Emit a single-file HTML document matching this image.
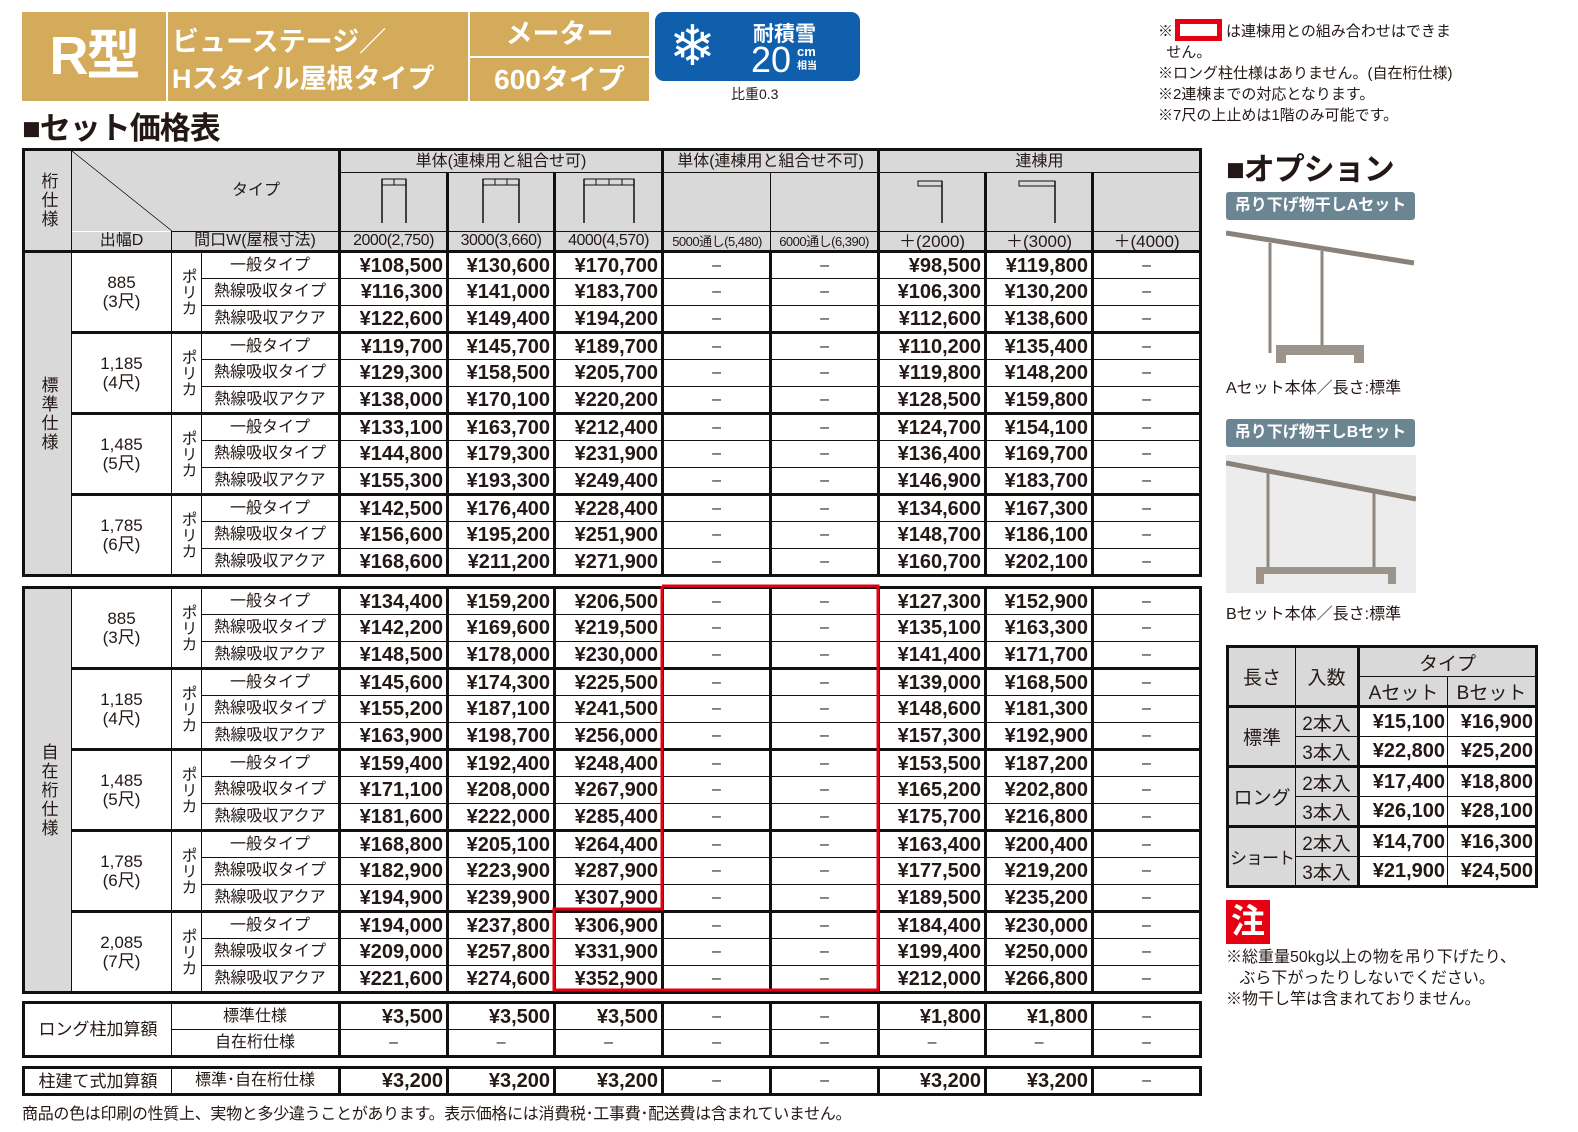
<!DOCTYPE html>
<html><head><meta charset="utf-8"><style>
*{margin:0;padding:0;box-sizing:border-box}
body{width:1578px;height:1132px;background:#fff;position:relative;overflow:hidden;font-family:"Liberation Sans","Noto Sans CJK JP",sans-serif;color:#231815}
.abs{position:absolute}
.gold{background:#d4ab5a;color:#fff;position:absolute}
table.t{position:absolute;left:22px;width:1179px;border-collapse:collapse;table-layout:fixed;border:3px solid #111}
table.t td{border:1px solid #111;text-align:center;font-size:16px;padding:0;line-height:1;white-space:nowrap;overflow:hidden}
table.t td.p{font-weight:bold;font-size:20px;text-align:right;padding-right:3px;border-left:3px solid #111;border-right:3px solid #111}
table.t td.d{border-left:3px solid #111;border-right:3px solid #111}
table.t tr.g td{border-top:3px solid #111}
table.t td.gr{background:#d9d9d9}
table.t td.ty{border-right:3px solid #111}
table.t td.n{font-size:17px;line-height:19px}
table.t td.v{writing-mode:vertical-rl;text-orientation:upright;letter-spacing:2px;font-size:17px}
table.t td.po{writing-mode:vertical-rl;text-orientation:upright;font-size:16px;line-height:1}
table.t tr{height:27px}
.hd td{background:#d9d9d9}
.st{position:absolute;left:1226px;top:645px;width:310px;border-collapse:collapse;table-layout:fixed;border:3px solid #111}
.st td{border:1px solid #111;text-align:center;font-size:19px;height:30px;padding:0;white-space:nowrap}
.st td.g{background:#d9d9d9}
.st td.p{font-weight:bold;font-size:20px;text-align:right;padding-right:2px}
.note{font-size:15px;line-height:21px}
</style></head><body>

<div class="gold" style="left:22px;top:12px;width:144px;height:89px;font-size:54px;font-weight:bold;line-height:89px;text-align:center;letter-spacing:-2px">R型</div>
<div class="gold" style="left:168px;top:12px;width:300px;height:89px;font-size:27px;font-weight:bold;padding:12px 0 0 4px;line-height:37px">ビューステージ／<br>Hスタイル屋根タイプ</div>
<div class="gold" style="left:470px;top:12px;width:179px;height:44px;font-size:27px;font-weight:bold;text-align:center;line-height:44px">メーター</div>
<div class="gold" style="left:470px;top:58px;width:179px;height:43px;font-size:28px;font-weight:bold;text-align:center;line-height:43px">600タイプ</div>
<div class="abs" style="left:655px;top:12px;width:205px;height:69px;background:#0f5fad;border-radius:9px;color:#fff">
  <div class="abs" style="left:14px;top:2px;font-size:56px;line-height:64px">❄</div>
  <div class="abs" style="left:98px;top:6px;font-size:21px;font-weight:bold">耐積雪</div>
  <div class="abs" style="left:96px;top:28px;font-size:36px;line-height:40px">20</div>
  <div class="abs" style="left:142px;top:33px;font-size:13px;line-height:13px;font-weight:bold">cm<br><span style="font-size:10px">相当</span></div>
</div>
<div class="abs" style="left:731px;top:84px;font-size:14px">比重0.3</div>
<div class="abs" style="left:22px;top:103px;font-size:31px;font-weight:bold;letter-spacing:-1px">■セット価格表</div>

<div class="abs note" style="left:1158px;top:19px">※<span style="display:inline-block;width:47px;height:22px;border:5px solid #e60012;vertical-align:-5px;margin:0 4px 0 2px"></span>は連棟用との組み合わせはできま<br>&nbsp;&nbsp;せん。<br>※ロング柱仕様はありません。(自在桁仕様)<br>※2連棟までの対応となります。<br>※7尺の上止めは1階のみ可能です。</div>

<table class="t" style="top:148px">
<colgroup><col style="width:48px"><col style="width:100px"><col style="width:30px"><col style="width:138px"><col style="width:108px"><col style="width:107px"><col style="width:108px"><col style="width:108px"><col style="width:108px"><col style="width:107px"><col style="width:107px"><col style="width:108px"></colgroup>
<tr class="hd" style="height:23px"><td rowspan="3" class="v">桁仕様</td><td colspan="3" rowspan="2" style="background:#d9d9d9 linear-gradient(to top right,transparent 49.6%,#111 49.8%,#111 50.2%,transparent 50.4%) no-repeat;background-size:100px 100%;text-align:left;padding-left:160px;border-bottom:none">タイプ</td><td colspan="3" style="border-left:3px solid #111;border-right:3px solid #111">単体(連棟用と組合せ可)</td><td colspan="2" style="border-right:3px solid #111">単体(連棟用と組合せ不可)</td><td colspan="3">連棟用</td></tr>
<tr class="hd" style="height:59px">
<td style="border-left:3px solid #111;border-right:3px solid #111"><svg width="30" height="46"><rect x="3" y="2" width="24" height="6" fill="none" stroke="#111"/><line x1="3" y1="2" x2="3" y2="46" stroke="#111" stroke-width="1.5"/><line x1="27" y1="2" x2="27" y2="46" stroke="#111" stroke-width="1.5"/><line x1="15" y1="2" x2="15" y2="8" stroke="#111"/></svg></td>
<td style="border-right:3px solid #111"><svg width="42" height="46"><rect x="3" y="2" width="36" height="6" fill="none" stroke="#111"/><line x1="3" y1="2" x2="3" y2="46" stroke="#111" stroke-width="1.5"/><line x1="39" y1="2" x2="39" y2="46" stroke="#111" stroke-width="1.5"/><line x1="15" y1="2" x2="15" y2="8" stroke="#111"/><line x1="27" y1="2" x2="27" y2="8" stroke="#111"/></svg></td>
<td style="border-right:3px solid #111"><svg width="56" height="46"><rect x="3" y="2" width="50" height="6" fill="none" stroke="#111"/><line x1="3" y1="2" x2="3" y2="46" stroke="#111" stroke-width="1.5"/><line x1="53" y1="2" x2="53" y2="46" stroke="#111" stroke-width="1.5"/><line x1="15" y1="2" x2="15" y2="8" stroke="#111"/><line x1="28" y1="2" x2="28" y2="8" stroke="#111"/><line x1="41" y1="2" x2="41" y2="8" stroke="#111"/></svg></td>
<td></td><td style="border-right:3px solid #111"></td>
<td style="border-right:3px solid #111"><svg width="30" height="46"><rect x="1" y="4" width="24" height="5" fill="none" stroke="#111"/><line x1="25" y1="4" x2="25" y2="46" stroke="#111" stroke-width="1.5"/></svg></td>
<td style="border-right:3px solid #111"><svg width="42" height="46"><rect x="1" y="4" width="36" height="5" fill="none" stroke="#111"/><line x1="37" y1="4" x2="37" y2="46" stroke="#111" stroke-width="1.5"/></svg></td>
<td></td></tr>
<tr class="hd" style="height:20px"><td style="border-top:none;border-right:none">出幅D</td><td colspan="2">間口W(屋根寸法)</td><td style="border-left:3px solid #111;border-right:3px solid #111;font-size:16px;letter-spacing:-0.5px">2000(2,750)</td><td style="border-right:3px solid #111;font-size:16px;letter-spacing:-0.5px">3000(3,660)</td><td style="border-right:3px solid #111;font-size:16px;letter-spacing:-0.5px">4000(4,570)</td><td style="font-size:13px;letter-spacing:-0.5px">5000通し(5,480)</td><td style="border-right:3px solid #111;font-size:13px;letter-spacing:-0.5px">6000通し(6,390)</td><td style="border-right:3px solid #111;font-size:17px">＋(2000)</td><td style="border-right:3px solid #111;font-size:17px">＋(3000)</td><td style="font-size:17px">＋(4000)</td></tr>

<tr class="g"><td rowspan="12" class="v gr">標準仕様</td><td rowspan="3" class="n">885<br>(3尺)</td><td rowspan="3" class="po">ポリカ</td><td class="ty">一般タイプ</td><td class="p">¥108,500</td><td class="p">¥130,600</td><td class="p">¥170,700</td><td>–</td><td class="d">–</td><td class="p">¥98,500</td><td class="p">¥119,800</td><td>–</td></tr>
<tr><td class="ty">熱線吸収タイプ</td><td class="p">¥116,300</td><td class="p">¥141,000</td><td class="p">¥183,700</td><td>–</td><td class="d">–</td><td class="p">¥106,300</td><td class="p">¥130,200</td><td>–</td></tr>
<tr><td class="ty">熱線吸収アクア</td><td class="p">¥122,600</td><td class="p">¥149,400</td><td class="p">¥194,200</td><td>–</td><td class="d">–</td><td class="p">¥112,600</td><td class="p">¥138,600</td><td>–</td></tr>
<tr class="g"><td rowspan="3" class="n">1,185<br>(4尺)</td><td rowspan="3" class="po">ポリカ</td><td class="ty">一般タイプ</td><td class="p">¥119,700</td><td class="p">¥145,700</td><td class="p">¥189,700</td><td>–</td><td class="d">–</td><td class="p">¥110,200</td><td class="p">¥135,400</td><td>–</td></tr>
<tr><td class="ty">熱線吸収タイプ</td><td class="p">¥129,300</td><td class="p">¥158,500</td><td class="p">¥205,700</td><td>–</td><td class="d">–</td><td class="p">¥119,800</td><td class="p">¥148,200</td><td>–</td></tr>
<tr><td class="ty">熱線吸収アクア</td><td class="p">¥138,000</td><td class="p">¥170,100</td><td class="p">¥220,200</td><td>–</td><td class="d">–</td><td class="p">¥128,500</td><td class="p">¥159,800</td><td>–</td></tr>
<tr class="g"><td rowspan="3" class="n">1,485<br>(5尺)</td><td rowspan="3" class="po">ポリカ</td><td class="ty">一般タイプ</td><td class="p">¥133,100</td><td class="p">¥163,700</td><td class="p">¥212,400</td><td>–</td><td class="d">–</td><td class="p">¥124,700</td><td class="p">¥154,100</td><td>–</td></tr>
<tr><td class="ty">熱線吸収タイプ</td><td class="p">¥144,800</td><td class="p">¥179,300</td><td class="p">¥231,900</td><td>–</td><td class="d">–</td><td class="p">¥136,400</td><td class="p">¥169,700</td><td>–</td></tr>
<tr><td class="ty">熱線吸収アクア</td><td class="p">¥155,300</td><td class="p">¥193,300</td><td class="p">¥249,400</td><td>–</td><td class="d">–</td><td class="p">¥146,900</td><td class="p">¥183,700</td><td>–</td></tr>
<tr class="g"><td rowspan="3" class="n">1,785<br>(6尺)</td><td rowspan="3" class="po">ポリカ</td><td class="ty">一般タイプ</td><td class="p">¥142,500</td><td class="p">¥176,400</td><td class="p">¥228,400</td><td>–</td><td class="d">–</td><td class="p">¥134,600</td><td class="p">¥167,300</td><td>–</td></tr>
<tr><td class="ty">熱線吸収タイプ</td><td class="p">¥156,600</td><td class="p">¥195,200</td><td class="p">¥251,900</td><td>–</td><td class="d">–</td><td class="p">¥148,700</td><td class="p">¥186,100</td><td>–</td></tr>
<tr><td class="ty">熱線吸収アクア</td><td class="p">¥168,600</td><td class="p">¥211,200</td><td class="p">¥271,900</td><td>–</td><td class="d">–</td><td class="p">¥160,700</td><td class="p">¥202,100</td><td>–</td></tr>
</table>

<table class="t" style="top:586px">
<colgroup><col style="width:48px"><col style="width:100px"><col style="width:30px"><col style="width:138px"><col style="width:108px"><col style="width:107px"><col style="width:108px"><col style="width:108px"><col style="width:108px"><col style="width:107px"><col style="width:107px"><col style="width:108px"></colgroup>
<tr><td rowspan="15" class="v gr">自在桁仕様</td><td rowspan="3" class="n">885<br>(3尺)</td><td rowspan="3" class="po">ポリカ</td><td class="ty">一般タイプ</td><td class="p">¥134,400</td><td class="p">¥159,200</td><td class="p">¥206,500</td><td>–</td><td class="d">–</td><td class="p">¥127,300</td><td class="p">¥152,900</td><td>–</td></tr>
<tr><td class="ty">熱線吸収タイプ</td><td class="p">¥142,200</td><td class="p">¥169,600</td><td class="p">¥219,500</td><td>–</td><td class="d">–</td><td class="p">¥135,100</td><td class="p">¥163,300</td><td>–</td></tr>
<tr><td class="ty">熱線吸収アクア</td><td class="p">¥148,500</td><td class="p">¥178,000</td><td class="p">¥230,000</td><td>–</td><td class="d">–</td><td class="p">¥141,400</td><td class="p">¥171,700</td><td>–</td></tr>
<tr class="g"><td rowspan="3" class="n">1,185<br>(4尺)</td><td rowspan="3" class="po">ポリカ</td><td class="ty">一般タイプ</td><td class="p">¥145,600</td><td class="p">¥174,300</td><td class="p">¥225,500</td><td>–</td><td class="d">–</td><td class="p">¥139,000</td><td class="p">¥168,500</td><td>–</td></tr>
<tr><td class="ty">熱線吸収タイプ</td><td class="p">¥155,200</td><td class="p">¥187,100</td><td class="p">¥241,500</td><td>–</td><td class="d">–</td><td class="p">¥148,600</td><td class="p">¥181,300</td><td>–</td></tr>
<tr><td class="ty">熱線吸収アクア</td><td class="p">¥163,900</td><td class="p">¥198,700</td><td class="p">¥256,000</td><td>–</td><td class="d">–</td><td class="p">¥157,300</td><td class="p">¥192,900</td><td>–</td></tr>
<tr class="g"><td rowspan="3" class="n">1,485<br>(5尺)</td><td rowspan="3" class="po">ポリカ</td><td class="ty">一般タイプ</td><td class="p">¥159,400</td><td class="p">¥192,400</td><td class="p">¥248,400</td><td>–</td><td class="d">–</td><td class="p">¥153,500</td><td class="p">¥187,200</td><td>–</td></tr>
<tr><td class="ty">熱線吸収タイプ</td><td class="p">¥171,100</td><td class="p">¥208,000</td><td class="p">¥267,900</td><td>–</td><td class="d">–</td><td class="p">¥165,200</td><td class="p">¥202,800</td><td>–</td></tr>
<tr><td class="ty">熱線吸収アクア</td><td class="p">¥181,600</td><td class="p">¥222,000</td><td class="p">¥285,400</td><td>–</td><td class="d">–</td><td class="p">¥175,700</td><td class="p">¥216,800</td><td>–</td></tr>
<tr class="g"><td rowspan="3" class="n">1,785<br>(6尺)</td><td rowspan="3" class="po">ポリカ</td><td class="ty">一般タイプ</td><td class="p">¥168,800</td><td class="p">¥205,100</td><td class="p">¥264,400</td><td>–</td><td class="d">–</td><td class="p">¥163,400</td><td class="p">¥200,400</td><td>–</td></tr>
<tr><td class="ty">熱線吸収タイプ</td><td class="p">¥182,900</td><td class="p">¥223,900</td><td class="p">¥287,900</td><td>–</td><td class="d">–</td><td class="p">¥177,500</td><td class="p">¥219,200</td><td>–</td></tr>
<tr><td class="ty">熱線吸収アクア</td><td class="p">¥194,900</td><td class="p">¥239,900</td><td class="p">¥307,900</td><td>–</td><td class="d">–</td><td class="p">¥189,500</td><td class="p">¥235,200</td><td>–</td></tr>
<tr class="g"><td rowspan="3" class="n">2,085<br>(7尺)</td><td rowspan="3" class="po">ポリカ</td><td class="ty">一般タイプ</td><td class="p">¥194,000</td><td class="p">¥237,800</td><td class="p">¥306,900</td><td>–</td><td class="d">–</td><td class="p">¥184,400</td><td class="p">¥230,000</td><td>–</td></tr>
<tr><td class="ty">熱線吸収タイプ</td><td class="p">¥209,000</td><td class="p">¥257,800</td><td class="p">¥331,900</td><td>–</td><td class="d">–</td><td class="p">¥199,400</td><td class="p">¥250,000</td><td>–</td></tr>
<tr><td class="ty">熱線吸収アクア</td><td class="p">¥221,600</td><td class="p">¥274,600</td><td class="p">¥352,900</td><td>–</td><td class="d">–</td><td class="p">¥212,000</td><td class="p">¥266,800</td><td>–</td></tr>
</table>

<svg class="abs" style="left:0;top:0" width="1578" height="1132"><polyline points="662,586 878,586 878,990 554,990 554,909 662,909 662,586" fill="none" stroke="#e60012" stroke-width="3"/></svg>

<table class="t" style="top:1001px">
<colgroup><col style="width:48px"><col style="width:100px"><col style="width:30px"><col style="width:138px"><col style="width:108px"><col style="width:107px"><col style="width:108px"><col style="width:108px"><col style="width:108px"><col style="width:107px"><col style="width:107px"><col style="width:108px"></colgroup>
<tr><td colspan="2" rowspan="2" style="font-size:17px">ロング柱加算額</td><td colspan="2" class="ty">標準仕様</td><td class="p">¥3,500</td><td class="p">¥3,500</td><td class="p">¥3,500</td><td>–</td><td class="d">–</td><td class="p">¥1,800</td><td class="p">¥1,800</td><td>–</td></tr>
<tr><td colspan="2" class="ty">自在桁仕様</td><td class="d">–</td><td class="d">–</td><td class="d">–</td><td>–</td><td class="d">–</td><td class="d">–</td><td class="d">–</td><td>–</td></tr>
</table>
<table class="t" style="top:1066px">
<colgroup><col style="width:48px"><col style="width:100px"><col style="width:30px"><col style="width:138px"><col style="width:108px"><col style="width:107px"><col style="width:108px"><col style="width:108px"><col style="width:108px"><col style="width:107px"><col style="width:107px"><col style="width:108px"></colgroup>
<tr><td colspan="2" style="font-size:17px">柱建て式加算額</td><td colspan="2" class="ty">標準･自在桁仕様</td><td class="p">¥3,200</td><td class="p">¥3,200</td><td class="p">¥3,200</td><td>–</td><td class="d">–</td><td class="p">¥3,200</td><td class="p">¥3,200</td><td>–</td></tr>
</table>
<div class="abs" style="left:22px;top:1100px;font-size:16px;letter-spacing:-0.3px">商品の色は印刷の性質上、実物と多少違うことがあります。表示価格には消費税･工事費･配送費は含まれていません。</div>

<div class="abs" style="left:1226px;top:144px;font-size:31px;font-weight:bold;letter-spacing:-1px">■オプション</div>
<div class="abs" style="left:1226px;top:192px;width:189px;height:28px;background:#6c8592;border-radius:3px;color:#fff;font-size:16px;font-weight:bold;line-height:28px;text-align:center">吊り下げ物干しAセット</div>
<svg class="abs" style="left:1226px;top:225px" width="190" height="142">
<line x1="0" y1="8" x2="188" y2="38" stroke="#8a8178" stroke-width="5"/>
<line x1="44" y1="18" x2="44" y2="128" stroke="#8f877f" stroke-width="3"/>
<line x1="96" y1="26" x2="96" y2="128" stroke="#8f877f" stroke-width="3"/>
<rect x="50" y="120" width="88" height="10" fill="#9c948b"/>
<rect x="50" y="130" width="10" height="8" fill="#9c948b"/><rect x="128" y="130" width="10" height="8" fill="#9c948b"/>
</svg>
<div class="abs" style="left:1226px;top:374px;font-size:16px">Aセット本体／長さ:標準</div>
<div class="abs" style="left:1226px;top:419px;width:189px;height:28px;background:#6c8592;border-radius:3px;color:#fff;font-size:16px;font-weight:bold;line-height:28px;text-align:center">吊り下げ物干しBセット</div>
<svg class="abs" style="left:1226px;top:455px" width="190" height="138">
<rect width="190" height="138" fill="#ececec"/>
<line x1="0" y1="8" x2="190" y2="44" stroke="#8a8178" stroke-width="5"/>
<line x1="42" y1="18" x2="42" y2="118" stroke="#8f877f" stroke-width="3"/>
<line x1="148" y1="38" x2="148" y2="118" stroke="#8f877f" stroke-width="3"/>
<rect x="30" y="112" width="140" height="7" fill="#9c948b"/>
<rect x="30" y="119" width="8" height="10" fill="#9c948b"/><rect x="162" y="119" width="8" height="10" fill="#9c948b"/>
</svg>
<div class="abs" style="left:1226px;top:600px;font-size:16px">Bセット本体／長さ:標準</div>

<table class="st">
<colgroup><col style="width:68px"><col style="width:63px"><col style="width:89px"><col style="width:89px"></colgroup>
<tr><td class="g" rowspan="2">長さ</td><td class="g" rowspan="2" style="border-right:3px solid #111">入数</td><td class="g" colspan="2">タイプ</td></tr>
<tr><td class="g">Aセット</td><td class="g">Bセット</td></tr>
<tr style="border-top:3px solid #111"><td class="g" rowspan="2">標準</td><td class="g" style="border-right:3px solid #111">2本入</td><td class="p">¥15,100</td><td class="p">¥16,900</td></tr>
<tr><td class="g" style="border-right:3px solid #111">3本入</td><td class="p">¥22,800</td><td class="p">¥25,200</td></tr>
<tr style="border-top:3px solid #111"><td class="g" rowspan="2">ロング</td><td class="g" style="border-right:3px solid #111">2本入</td><td class="p">¥17,400</td><td class="p">¥18,800</td></tr>
<tr><td class="g" style="border-right:3px solid #111">3本入</td><td class="p">¥26,100</td><td class="p">¥28,100</td></tr>
<tr style="border-top:3px solid #111"><td class="g" rowspan="2" style="font-size:17px;letter-spacing:-1px">ショート</td><td class="g" style="border-right:3px solid #111">2本入</td><td class="p">¥14,700</td><td class="p">¥16,300</td></tr>
<tr><td class="g" style="border-right:3px solid #111">3本入</td><td class="p">¥21,900</td><td class="p">¥24,500</td></tr>
</table>
<div class="abs" style="left:1226px;top:900px;width:44px;height:44px;background:#e60012;color:#fff;font-size:34px;font-weight:bold;line-height:44px;text-align:center">注</div>
<div class="abs note" style="left:1226px;top:947px;font-size:16px;line-height:21px">※総重量50kg以上の物を吊り下げたり、<br>&nbsp;&nbsp;&nbsp;ぶら下がったりしないでください。<br>※物干し竿は含まれておりません。</div>
</body></html>
